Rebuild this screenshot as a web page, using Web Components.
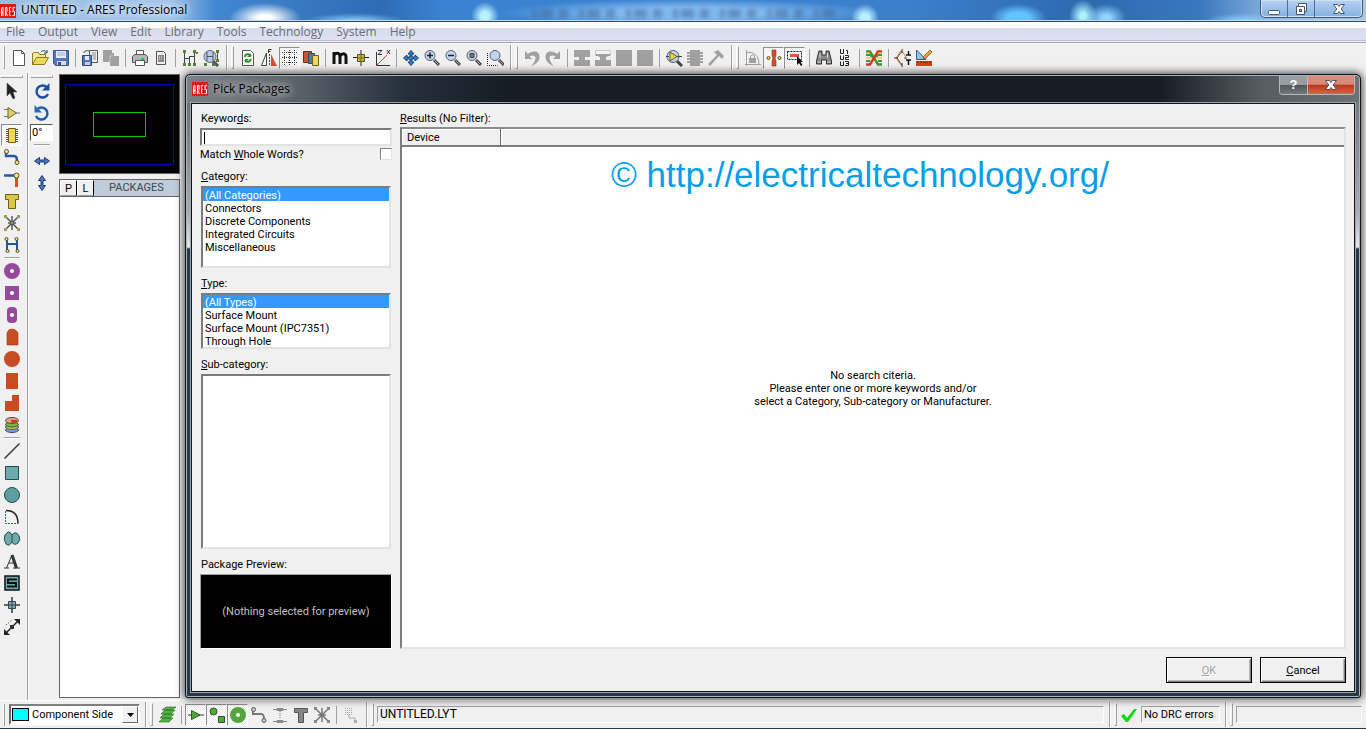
<!DOCTYPE html>
<html lang="en">
<head>
<meta charset="utf-8">
<title>UNTITLED - ARES Professional</title>
<style>
  html, body { margin: 0; height: 100%; }
  body { background: #f0f0f0; overflow: hidden; font: 11px/13px Roboto, "Liberation Sans", Arial, sans-serif; color: #000; }
</style>
</head>
<body>
<ares-app></ares-app>
<script>
/* Icon artwork, drawn on an 18 x 18 grid. */
const LENS = '<path d="M11 11l5 5" stroke="#444" stroke-width="3"/><path d="M11.500 11.500l4 4" stroke="#aaa"/><circle cx="7" cy="6.500" r="5" fill="#c3d3ee" stroke="#555e70"/>';
const ICONS = {
  new: '<path d="M3.500 1.500h8l3 3v12h-11z" fill="#fff" stroke="#555"/><path d="M11.500 1.500v3h3" fill="none" stroke="#555"/>',
  open: '<path d="M1.500 15.500v-11l2-1h4l1 2h6v3" fill="#f5e894" stroke="#8a7a1c"/><path d="M1.500 15.500l4-7h12l-4 7z" fill="#ecd95c" stroke="#8a7a1c"/><path d="M10 3c2-2 4-2 6 1m0-3v3h-3" fill="none" stroke="#26415c"/>',
  save: '<path d="M1.500 1.500h15v15h-13l-2-2z" fill="#5277b5" stroke="#3a5690"/><path d="M4 2h10v7H4z" fill="#e6edf8"/><path d="M5 4h8M5 6h8" stroke="#9cb0d4"/><path d="M5 12h9v4H5z" fill="#d8dce4"/><path d="M6 13h3v3H6z" fill="#35508a"/>',
  imp: '<path d="M8.500 1.500h8v12h-8z" fill="#eee" stroke="#555"/><path d="M3 4c1-3 4-3 6-1" fill="none" stroke="#26415c"/><path d="M11 4h4M11 6h4M12 8h3M12 10h3" stroke="#888"/><path d="M1.500 6.500h9v10h-9z" fill="#5277b5" stroke="#2f4a80"/><path d="M4 7h4v4H4z" fill="#e6edf8"/><path d="M4 13h5v3H4z" fill="#ccd"/>',
  exp: '<path d="M1 1h9v3h2v3h5v10H8v-4H1z" fill="#a0a0a0"/><path d="M8 13V7h3" stroke="#c8c8c8" fill="none"/>',
  print: '<path d="M5.500 6V1.500h7V6" fill="#fff" stroke="#555"/><path d="M1.500 7.500l2-2h11l2 2v6h-15z" fill="#b4b8bd" stroke="#555"/><path d="M4.500 11.500h9v5h-9z" fill="#fff" stroke="#555"/><path d="M10 9h3v2h-3z" fill="#2c2"/>',
  setup: '<path d="M4.500 2.500h7l2 2v11h-9z" fill="#eee" stroke="#555"/><path d="M6 6h6v7H6z" fill="#888"/><path d="M7 8h4M7 10h4" stroke="#ddd" stroke-dasharray="1 1"/>',
  net: '<path d="M3.500 3v13M3.500 9.500h5M8.500 7v9M8.500 7.500h5M13.500 3v13" stroke="#444" fill="none"/><path d="M2 1h3v3H2zM2 14h3v3H2zM7 14h3v3H7zM12 14h3v3h-3zM12 1h3v3h-3zM15 3h2v2h-2z" fill="#57803f"/>',
  netfind: '<path d="M11 12l5 5" stroke="#555" stroke-width="3"/><circle cx="8" cy="7.500" r="6" fill="#b8cbe8" stroke="#667"/><path d="M5 3v9M5 7.500h6M11 3v10M15.500 2v10" stroke="#555" fill="none"/><path d="M14 1h3v3h-3zM2 14h3v3H2zM10 14h3v3h-3zM14 10h3v3h-3z" fill="#57803f"/>',
  refresh: '<path d="M3.500 1.500h8l3 3v12h-11z" fill="#fff" stroke="#555"/><path d="M6 8c0-3 4-4 6-1M12 10c-1 3-4 4-6 1" stroke="#2f8f2f" stroke-width="2" fill="none"/><path d="M12 4v4H8zM6 14v-4h4z" fill="#2f8f2f"/>',
  flip: '<path d="M6.500 4v12.500h-5z" fill="#fff" stroke="#444"/><path d="M11 5l6 12h-6z" fill="#d4512e"/><path d="M9.500 5v12" stroke="#444" stroke-dasharray="2 1"/><path d="M8.500 4V.500h3M8.500 2.500h2" stroke="#333" fill="none"/>',
  grid: '<path d="M1 3.500h16M1 8.500h16M1 13.500h16M3.500 1v16M8.500 1v16M13.500 1v16" stroke="#333" stroke-dasharray="1 1"/>',
  layers3: '<path d="M1.500 2.500h8v11h-8z" fill="#c85434" stroke="#6a2a18"/><path d="M6.500 4.500h6v10h-6z" fill="#5577a8" stroke="#334766"/><path d="M10.500 6.500h6v10h-6z" fill="#ecd95c" stroke="#6d6118"/>',
  metric: '<path d="M3 15V3M3 6c3-3 6-2 6 2v7M9 7c3-4 6-2 6 1v7" stroke="#111" stroke-width="3" fill="none"/>',
  origin: '<path d="M9 1v16M1 8.500h16" stroke="#222"/><path d="M5.500 5.500h7v7h-7z" fill="#c9b738" stroke="#555122"/><path d="M9 5v8M5 9h8" stroke="#6b6423"/>',
  polar: '<path d="M3.500 3v13.500H17" stroke="#333" fill="none"/><path d="M3.500 16.500L14 6" stroke="#e0342a" fill="none"/><path d="M5 1.500h4l-4 4h4M14 1l3 4M17 1l-3 4" stroke="#333" fill="none"/>',
  pan: '<path d="M9 1.500l3 3.500h-2v3h3V6l3.500 3-3.500 3v-2h-3v3h2l-3 3.500L6 13h2v-3H5v2L1.500 9 5 6v2h3V5H6z" fill="#2d82cf" stroke="#18406e"/>',
  zin: LENS + '<path d="M4 6.500h6M7 3.500v6" stroke="#222" stroke-width="1.500"/>',
  zout: LENS + '<path d="M4 6.500h6" stroke="#222" stroke-width="1.500"/>',
  zall: LENS + '<path d="M5 4.500h4v4H5z" fill="#777" stroke="#444"/>',
  zarea: '<g transform="translate(2 0)">' + LENS + '</g><path d="M1.500 4v12.500h10" stroke="#222" fill="none" stroke-dasharray="1 1"/>',
  undo: '<path d="M2 2v8h7L6.500 7.500c3-2 6-1 6 1.500 0 3-2 5-4 8 5-2 8-5 8-9 0-6-6-7-11.500-3z" fill="#a0a0a0"/>',
  redo: '<path d="M16 2v8H9l2.500-2.500c-3-2-6-1-6 1.500 0 3 2 5 4 8-5-2-8-5-8-9 0-6 6-7 11.500-3z" fill="#a0a0a0"/>',
  bcopy: '<path d="M1 1h16v7h-5v3h5v6H1v-6h5V8H1z" fill="#a0a0a0"/>',
  bmove: '<path d="M1.500 7V1.500h15V7M1 17v-6h5V8H4l5-5 5 5h-2v3h5v6z" fill="#a0a0a0"/><path d="M2 2h14v3H2z" fill="#f4f4f4"/><path d="M6 5h6v6H6z" fill="#a0a0a0"/>',
  block: '<path d="M1 1h16v16H1z" fill="#a0a0a0"/>',
  pick: '<path d="M12 12l5 5" stroke="#444" stroke-width="3"/><circle cx="8" cy="7.500" r="6" fill="#c3d3ee" stroke="#555e70"/><path d="M5 3l7 4.500L5 12z" fill="#e6d65a" stroke="#6d6118"/><path d="M1 7.500h3M12 7.500h5" stroke="#444"/>',
  make: '<path d="M4 1h10v16H4z" fill="#a0a0a0"/><path d="M2.500 3v12M15.500 3v12" stroke="#a0a0a0" stroke-width="3" stroke-dasharray="2 1"/>',
  decomp: '<path d="M7 3l4-2 6 6-2 3-3-3-9 10-2-2L10 6z" fill="#a0a0a0"/>',
  lock: '<path d="M2.500 1v16M1 15.500h16M3 3.500h4q8 2 8 12" fill="none" stroke="#a0a0a0"/><path d="M5 9h7v5H5z" fill="#a0a0a0"/><path d="M6.500 9V7q2-2 4 0v2" fill="none" stroke="#a0a0a0"/>',
  trace: '<path d="M7 1h4v6l-1 2 1 3v5H7v-5l1-3-1-2z" fill="#d4512e" stroke="#8a2e14" stroke-width=".6"/><circle cx="3.500" cy="9" r="1.500" fill="#ecd95c" stroke="#555122"/><circle cx="14.500" cy="9" r="1.500" fill="#ecd95c" stroke="#555122"/>',
  selfil: '<path d="M1.500 2.500h14v8h-14z" fill="none" stroke="#222" stroke-dasharray="2 1"/><path d="M4 5h9v3H4z" fill="#e0583a"/><path d="M11 7v9l2-2 2 3 1.500-1-2-3H17z" fill="#111"/>',
  find: '<path d="M4 2h3v4h4V2h3l2.500 10v3h-5v-4h-5v4h-5v-3z" fill="#888" stroke="#333"/><path d="M5 4v5M12.500 4v5" stroke="#ddd"/><path d="M2 13h4M12 13h4" stroke="#ccc"/>',
  annot: '<path d="M4.500 0v4.500h3V0M10 1.500h1.500V5M4.500 6.500v4h3v-4M9 6.500h3.500v2h-3v2H13M4.500 12.500v4h3v-4M9 12.500h3.500v4H9M10 14.500h2" fill="none" stroke="#222"/>',
  auto: '<path d="M1 2.500h4l8 13h4" stroke="#3d9930" stroke-width="2.500" fill="none"/><path d="M1 15.500h4l8-13h4" stroke="#dc3524" stroke-width="2.500" fill="none"/><path d="M1 6h4l3 2.500M17 6h-4l-2 2M1 12h4M17 12h-4" stroke="#3d9930" stroke-width="2" fill="none"/><path d="M1 4h4M13 4h4M1 9h5M12 9h5" stroke="#eda72f"/>',
  drc: '<path d="M8 2L3 9l5 7" stroke="#555" fill="none"/><path d="M7 2L2 9l5 7M8 2l4 6" stroke="#e07b29" fill="none"/><path d="M0 9h4M8 0v4M8 14v4M10 9h3" stroke="#333"/><path d="M12 6h5M14.500 2v4M12 11h5M14.500 11v5" stroke="#111" stroke-width="1.500"/>',
  ruler: '<path d="M1.500 1v9.500H11z" fill="#8cc9e8" stroke="#2a6080"/><path d="M8 10l1-3 6-6 2 2-6 6z" fill="#e8a33a" stroke="#6d4a18" stroke-width=".7"/><path d="M1 12h16v5H1z" fill="#d4441e"/><path d="M3 12v2M6 12v2M9 12v2M12 12v2M15 12v2" stroke="#6a1c08"/>',
  arrow: '<path d="M4 1v13l3-3 3 6 2-1-2-6h4z" fill="#222" stroke="#555" stroke-width=".6"/>',
  comp: '<path d="M1 5.500h4M1 12.500h4M13 9h4" stroke="#777"/><path d="M5 3.500L13.500 9 5 14.500z" fill="#ddcc68" stroke="#6d6630"/>',
  chip: '<path d="M4 3v13M14 3v13" stroke="#555" stroke-width="2" stroke-dasharray="1 1"/><path d="M5.500 2.500h7v14h-7z" fill="#ecd95c" stroke="#6d6118"/>',
  track: '<path d="M3 4v4h8q3 0 3 5" stroke="#2556a4" stroke-width="2.500" fill="none"/><circle cx="3.500" cy="3.500" r="2" fill="#f1e788" stroke="#555122"/><circle cx="14" cy="14.500" r="2" fill="#f1e788" stroke="#555122"/>',
  via: '<path d="M1 5.500h10" stroke="#2556a4" stroke-width="2.500"/><path d="M13.500 7v10" stroke="#d4512e" stroke-width="3"/><circle cx="13.500" cy="5.500" r="2.500" fill="#f1e788" stroke="#555122"/>',
  zone: '<path d="M2.500 2.500h13v5h-3v9h-7v-9h-3z" fill="#d9c74c" stroke="#6d6118"/>',
  rats: '<path d="M3 3l12 12M15 3L3 15M9 2v14M5 9h8" stroke="#555" stroke-width="1.500"/><path d="M1 1h3v3H1zM14 1h3v3h-3zM1 14h3v3H1zM14 14h3v3h-3zM8 8h2v2H8z" fill="#9a9a50"/>',
  conn: '<path d="M4 3v5h10V3M4 15V8M14 15V8" stroke="#2556a4" stroke-width="2" fill="none"/><circle cx="3.500" cy="3" r="1.500" fill="#f1e788" stroke="#555122"/><circle cx="13.500" cy="3" r="1.500" fill="#f1e788" stroke="#555122"/><circle cx="4.500" cy="15" r="1.500" fill="#f1e788" stroke="#555122"/><circle cx="14.500" cy="15" r="1.500" fill="#f1e788" stroke="#555122"/>',
  padc: '<circle cx="9" cy="9" r="8" fill="#954a9b"/><circle cx="9" cy="9" r="2" fill="#fff"/>',
  pads: '<path d="M2 2h14v14H2z" fill="#954a9b"/><circle cx="9" cy="9" r="2" fill="#fff"/>',
  pado: '<rect x="4" y="1" width="10" height="16" rx="4" fill="#954a9b"/><circle cx="9" cy="9" r="2" fill="#fff"/>',
  edge: '<path d="M4 17V5q1-4 5-4t6 4v12z" fill="#c84c22" stroke="#a03a18" stroke-width=".6"/>',
  smc: '<circle cx="9" cy="9" r="8" fill="#c84c22"/>',
  sms: '<path d="M3 1h12v16H3z" fill="#c84c22"/>',
  poly: '<path d="M2 17V7h7V1h7v16z" fill="#c84c22"/>',
  stack: '<ellipse cx="9" cy="14" rx="6.500" ry="2.500" fill="#6fa4e8" stroke="#445"/><ellipse cx="9" cy="11" rx="6.500" ry="2.500" fill="#d8c45a" stroke="#554"/><ellipse cx="9" cy="8.500" rx="6.500" ry="2.500" fill="#6cc040" stroke="#354"/><ellipse cx="9" cy="4.500" rx="6.500" ry="3" fill="#e59a8c" stroke="#644"/><path d="M8 4h6v2q-3 2-6 0z" fill="#d8391c"/>',
  line: '<path d="M1.500 16.500l15-15" stroke="#333" stroke-width="1.500"/>',
  rect: '<path d="M2.500 2.500h13v13h-13z" fill="#6cabab" stroke="#2a4a52"/>',
  circ: '<circle cx="9" cy="9" r="7.500" fill="#5f9ea0" stroke="#2a4a52"/>',
  arc: '<path d="M3 2.500q12 0 12 13" fill="none" stroke="#222" stroke-width="1.500"/><path d="M2.500 3v12.500H15" fill="none" stroke="#2a64b0" stroke-dasharray="2 1"/>',
  path: '<path d="M9 5q4-5 7 1 2 4-1 7-4 3-6-1-3 5-6 2-3-5-1-9 4-6 7 0z" fill="#6cabab" stroke="#2a4a52"/><path d="M9 5v7" stroke="#2a4a52"/>',
  text: '<path d="M1 16h5M10 16h7M3.500 16L9 3M6 11h6" stroke="#333" fill="none"/><path d="M9 3l4.500 13" stroke="#333" stroke-width="3"/>',
  sym: '<path d="M2 2h14v14H2z" fill="#6cabab" stroke="#111" stroke-width="1.500"/><path d="M14 5.500H5V9h8v3.500H4" fill="none" stroke="#111" stroke-width="2"/>',
  marker: '<path d="M9 1v16M1 9h16" stroke="#333" stroke-width="1.500"/><path d="M5.500 5.500h7v7h-7z" fill="#86a7b5" stroke="#2a4a52"/><path d="M9 5v8M5 9h8" stroke="#2a4a52"/>',
  dim: '<path d="M2 16L16 2" stroke="#222" stroke-width="1.500"/><path d="M17 1v6l-6-6zM1 17v-6l6 6z" fill="#222"/><path d="M7 7h4v4H7z" fill="#333"/><path d="M3 7l6-5" stroke="#222" stroke-dasharray="1 2"/>',
  cw: '<path d="M14 5.500A6 6 0 1 0 15 12" fill="none" stroke="#1d4f9c" stroke-width="2.500"/><path d="M16.500 1v7.500H9z" fill="#1d4f9c"/>',
  ccw: '<path d="M4 5.500A6 6 0 1 1 3 12" fill="none" stroke="#1d5fa8" stroke-width="2.500"/><path d="M1.500 1v7.500H9z" fill="#2a6cb4"/>',
  hflip: '<path d="M1.500 9l5-3.500V8h5V5.500L16.500 9l-5 3.500V10h-5v2.500z" fill="#4878c4" stroke="#1c3c6c"/>',
  vflip: '<path d="M9 1.500l3.500 5H10v5h2.500L9 16.500l-3.500-5H8v-5H5.500z" fill="#4878c4" stroke="#1c3c6c"/>',
  glayers: '<path d="M1 16l4-4h10l-4 4zM2 12l4-4h10l-4 4zM3 8l4-4h10l-4 4zM4 4l4-3h10l-4 3z" fill="#57b045" stroke="#246a1e" stroke-width=".6"/>',
  gcomp: '<path d="M1 9h16" stroke="#333"/><path d="M4.500 4.500L13 9l-8.500 4.500z" fill="#57a540" stroke="#2b5a20"/>',
  gshape: '<circle cx="5.500" cy="5.500" r="3.500" fill="#57a540" stroke="#2b5a20"/><path d="M10.500 10.500h6v6h-6z" fill="#57a540" stroke="#2b5a20"/>',
  gpad: '<circle cx="9" cy="9" r="8" fill="#57a540"/><circle cx="9" cy="9" r="2" fill="#fff"/>',
  gtrack: '<path d="M3 4v4h8q3 0 3 5" stroke="#777" stroke-width="2" fill="none"/><circle cx="3.500" cy="3.500" r="2" fill="#ccc" stroke="#555"/><circle cx="14" cy="14.500" r="2" fill="#ccc" stroke="#555"/>',
  gvia: '<path d="M2 3.500h14M2 15.500h14M6 2.500h6v2H6zM6 14.500h6v2H6z" fill="none" stroke="#888"/><path d="M9 5v8" stroke="#777" stroke-dasharray="1 1"/>',
  gzone: '<path d="M2.500 2.500h13v4h-4v10h-5v-10h-4z" fill="#888" stroke="#555"/>',
  grats: '<path d="M3 3l12 12M15 3L3 15M9 2v14M5 9h8" stroke="#777" stroke-width="1.500"/><path d="M1 1h3v3H1zM14 1h3v3h-3zM1 14h3v3H1zM14 14h3v3h-3z" fill="#888"/>',
  gfilter: '<path d="M3 2.500h7M3 4.500h7M3 6.500h7M3 8.500h7" stroke="#aaa" stroke-dasharray="1 1"/><path d="M7 8v4h6v4" stroke="#aaa" fill="none"/><path d="M12 14h3v3h-3z" fill="#aaa"/>',
  check: '<path d="M1 10l3-2 3 4 7-9h3L8 16H6z" fill="#0bdc0b"/>'
};

const svg = (name, size = 18) =>
  `<svg width="${size}" height="${size}" viewBox="0 0 18 18" aria-hidden="true">${ICONS[name]}</svg>`;

/* Registers an element whose shadow tree comes from a template. */
function define(name, css, html, ready) {
  customElements.define(name, class extends HTMLElement {
    connectedCallback() {
      if (this.shadowRoot) return;
      const t = document.createElement('template');
      t.innerHTML = `<style>*{box-sizing:border-box}${css}</style>${typeof html === 'function' ? html(this) : html}`;
      this.attachShadow({ mode: 'open' }).append(t.content.cloneNode(true));
      if (ready) ready(this.shadowRoot, this);
    }
  });
}
const btns = list => list.split(' ').map(n => {
  if (n === '|') return '<tool-sep></tool-sep>';
  const on = n.endsWith('*');
  return `<tool-button icon="${n.replace('*', '')}"${on ? ' pressed' : ''}></tool-button>`;
}).join('');

define('tool-button', `
  :host { display: block; flex: none; width: 21px; height: 22px; }
  button { width: 100%; height: 100%; border: 1px solid transparent; padding: 0; background: none; display: flex; align-items: center; justify-content: center; }
  :host([pressed]) button { border-color: #8c8c8c #fff #fff #8c8c8c; background: repeating-conic-gradient(#fff 0 25%, #ececec 0 50%) 0 0 / 2px 2px; }
  svg { flex: none; }`,
  el => `<button type="button" aria-label="${el.getAttribute('icon')}">${svg(el.getAttribute('icon'), 18)}</button>`);

define('tool-sep', `
  :host { display: block; flex: none; width: 8px; height: 18px; padding-left: 4px; }
  :host([horizontal]) { width: 100%; height: 4px; padding: 1px 3px 0 4px; }
  i { display: block; height: 100%; border-left: 1px solid #a0a0a0; }
  :host([horizontal]) i { height: 2px; border-left: 0; border-top: 1px solid #a0a0a0; background: #fff; }`, '<i></i>');

/* Group divider followed by the drag handle of the next group. */
define('tool-grip', `
  :host { display: flex; flex: none; align-self: stretch; width: 16px; padding: 1px 3px 1px 5px; gap: 3px; align-items: center; }
  :host([first]) { width: 8px; padding-left: 3px; }
  :host([first]) .bar { display: none; }
  .bar { width: 2px; align-self: stretch; background: linear-gradient(90deg, #a0a0a0 50%, #fff 50%); }
  .grip { width: 3px; height: 23px; border: 1px solid; border-color: #fff #a0a0a0 #a0a0a0 #fff; }`,
  '<span class="bar"></span><span class="grip"></span>');

define('title-bar', `
  :host { display: flex; justify-content: space-between; height: 22px; border-bottom: 1px solid #33475c; box-shadow: inset 0 -1px #c3dcf5; padding: 0 3px 0 0; position: relative; overflow: hidden;
    font: 12px/16px "Open Sans", "Noto Sans", sans-serif;
    background:
      radial-gradient(circle at 485px 16px, #b9f0ff 0 4px, transparent 14px),
      radial-gradient(circle at 865px 18px, #b9f0ff 0 4px, transparent 14px),
      radial-gradient(ellipse 36px 15px at 265px 18px, #fff 0 20%, transparent),
      radial-gradient(ellipse 50px 8px at 355px 21px, #8fd4ff, transparent),
      radial-gradient(ellipse 28px 14px at 1018px 18px, #62c4ff 0 40%, transparent),
      radial-gradient(ellipse 14px 16px at 1083px 16px, #aef0ff 0 20%, transparent),
      radial-gradient(ellipse 20px 14px at 1106px 18px, #8fd4ff 0 20%, transparent),
      radial-gradient(ellipse 40px 8px at 1245px 21px, #8fd4ff, transparent),
      radial-gradient(ellipse 190px 14px at 690px 13px, #7fb9ef 0 40%, transparent),
      linear-gradient(90deg, #98bde5 0, #a3c5ea 170px, #4287d0 215px, #2e6cb4 380px, #3b82d2 440px, #3c80cc 900px, #2d69ae 1090px, #3a78bd 1200px, #9cc0e8 1290px, #a9c8ea); }
  .smudge { position: absolute; left: 532px; top: 9px; width: 304px; height: 9px; filter: blur(2px); opacity: .45;
    background: repeating-linear-gradient(90deg, #3d5f8f 0 5px, transparent 5px 8px, #3d5f8f 8px 21px, transparent 21px 27px, #3d5f8f 27px 36px, transparent 36px 47px); }
  .name { display: flex; align-items: center; gap: 5px; }
  h1 { margin: 0; font: inherit; padding-bottom: 1px; text-shadow: 0 0 6px #fff, 0 0 8px #fff; }
  .ctl { display: flex; height: 18px; border: 1px solid #3c5878; border-top: 0; border-radius: 0 0 5px 5px; background: linear-gradient(#b5d2f2, #86b0e2); box-shadow: inset 0 0 0 1px #cfe3f7; z-index: 1; }
  button { width: 27px; padding: 0; border: 0; border-right: 1px solid #4c6f98; background: none; display: flex; justify-content: center; align-items: center; }
  button:last-child { width: 47px; border: 0; }`,
  `<div class="name"><ares-logo></ares-logo><h1>UNTITLED - ARES Professional</h1></div><span class="smudge"></span>
   <div class="ctl">
    <button type="button" aria-label="Minimize"><svg width="14" height="12"><rect x="1.500" y="7.500" width="11" height="4" rx="1" fill="#fff" stroke="#4a5666"/></svg></button>
    <button type="button" aria-label="Restore"><svg width="14" height="14"><path d="M4.500 1.500h8v8h-2v3h-8v-8h2z" fill="#fff" stroke="#4a5666"/><path d="M4.500 4.500h6v6" fill="none" stroke="#4a5666"/><rect x="5.500" y="7.500" width="2" height="2" fill="#9bbce0" stroke="#4a5666"/></svg></button>
    <button type="button" aria-label="Close"><svg width="14" height="12"><path d="M1.500 1.500h4L7 3.500l1.500-2h4L9.200 6l3.300 4.500h-4L7 8.500l-1.500 2h-4L4.800 6z" fill="#fff" stroke="#4a5666"/></svg></button>
   </div>`);

define('ares-logo', `
  :host { display: block; width: 16px; height: 14px; background: #e31b14; }
  svg { display: block; }`,
  `<svg width="16" height="14" aria-label="ARES"><path d="M1.500 12V4.500q0-1 1.500-1V12M1 8.500h2M5.500 12V3.500H7v4l-1 1 1.500 3.500M11 3.500H9.500v8H11M9 7.500h2M15 3.500h-2v4h1.500v4H12.500" fill="none" stroke="#fff"/></svg>`);

define('menu-bar', `
  :host { display: block; height: 21px; background: linear-gradient(#fdfdff 0 6px, #d6dcee 6px, #dde3f4 18px); border-bottom: 1px solid #a0a0a0; box-shadow: inset 0 -1px #f4f4f8, inset 0 -2px #b8bfd0; }
  nav { display: flex; padding: 2px 0 0 6px; gap: 13px; font: 12px/16px "Open Sans", "Noto Sans", sans-serif; }
  a { color: #6d6d6d; text-decoration: none; }`,
  `<nav>${['File', 'Output', 'View', 'Edit', 'Library', 'Tools', 'Technology', 'System', 'Help'].map(t => `<a href="#">${t}</a>`).join('')}</nav>`);

define('tool-bar', `
  :host { display: flex; align-items: center; height: 30px; padding-bottom: 2px; border-top: 1px solid #fff; }`,
  `<tool-grip first></tool-grip>${btns('new open save | imp exp | print setup | net netfind')}
   <tool-grip></tool-grip>${btns('refresh flip grid* layers3 | metric origin polar | pan zin zout zall zarea')}
   <tool-grip></tool-grip>${btns('undo redo | bcopy bmove block block | pick make decomp')}
   <tool-grip></tool-grip>${btns('lock trace* selfil* | find annot | auto | drc ruler')}`);

define('mode-rail', `
  :host { display: flex; flex-direction: column; align-items: center; padding: 2px 4px 0 0; border-right: 1px solid #a0a0a0; box-shadow: 1px 0 #fff; }
  .grip { width: 23px; height: 3px; border: 1px solid; border-color: #fff #a0a0a0 #a0a0a0 #fff; margin-bottom: 2px; }`,
  `<span class="grip"></span>${btns('arrow comp chip* track via zone rats conn')}<tool-sep horizontal></tool-sep>
   ${btns('padc pads pado edge smc sms poly stack')}<tool-sep horizontal></tool-sep>
   ${btns('line rect circ arc path text sym marker dim')}`);

define('orient-rail', `
  :host { display: flex; flex-direction: column; align-items: center; padding: 2px 6px 0 2px; }
  .grip { width: 23px; height: 3px; border: 1px solid; border-color: #fff #a0a0a0 #a0a0a0 #fff; margin-bottom: 2px; }
  input { width: 23px; height: 17px; padding: 0 1px; margin: 0 0 2px; border: 1px solid; border-color: #555 #fff #fff #555; border-radius: 0; background: #fff; font: 11px/13px Roboto, "Liberation Sans", sans-serif; }
  tool-sep { margin-bottom: 3px; }`,
  `<span class="grip"></span>${btns('cw ccw')}<input aria-label="Rotation angle" value="0°"><tool-sep horizontal></tool-sep>${btns('hflip vflip')}`);

define('object-panel', `
  :host { display: flex; flex-direction: column; gap: 5px; padding: 1px 0 2px; min-height: 0; }
  .view { height: 100px; border: 1px solid #646464; background: #000; padding: 9px 5px 8px; }
  .board { height: 100%; border: 1px solid #0000b4; display: flex; align-items: center; justify-content: center; }
  .frame { width: 53px; height: 25px; border: 1px solid #00c800; }
  .box { flex: 1; border: 1px solid #646464; background: #fff; min-height: 0; }
  .head { display: flex; height: 17px; background: #bfccda; border-bottom: 1px solid #646464; }
  button { width: 17px; height: 16px; padding: 0; font: inherit; line-height: 13px; background: #f0f0f0; border: 1px solid; border-color: #fff #000 #a0a0a0 #fff; }
  h2 { margin: 0; flex: 1; text-align: center; font: inherit; line-height: 16px; color: #3c4650; }`,
  `<div class="view"><div class="board"><div class="frame"></div></div></div>
   <div class="box"><div class="head"><button type="button">P</button><button type="button">L</button><h2>PACKAGES</h2></div></div>`);

const SUNK = 'border: 2px solid; border-color: #7c7c7c #e3e3e3 #e3e3e3 #7c7c7c;';

define('list-field', `
  :host { display: flex; flex-direction: column; gap: 3px; min-height: 0; }
  label { padding-left: 1px; }
  select { display: block; width: 190px; margin-left: 1px; height: var(--list-height, auto); flex: 1 1 auto; padding: 0; margin-top: 0; border-radius: 0; outline: 0; background: #fff; overflow: hidden; scrollbar-width: none; font: 11px/13px Roboto, "Liberation Sans", sans-serif; color: #000; ${SUNK} }
  option { padding: 1px 2px 0; min-height: 13px; height: 13px; line-height: 12px; }
  option:checked { background: linear-gradient(#39f, #39f); -webkit-text-fill-color: #fff; }`,
  el => `<label for="list"><slot></slot></label><select id="list" size="4">${(el.getAttribute('items') || '').split('|').filter(Boolean).map((o, i) => `<option${i ? '' : ' selected'}>${o}</option>`).join('')}</select>`);

define('push-button', `
  :host { display: block; width: 86px; height: 26px; }
  button { width: 100%; height: 100%; padding: 0; font: 11px/13px Roboto, "Liberation Sans", sans-serif; color: #000; background: #f0f0f0; border: 1px solid #000; box-shadow: inset 1px 1px #fff, inset -1px -1px #808080, inset -2px -2px #b8b8b8; }
  button:disabled { color: #a0a0a0; text-shadow: 1px 1px #fff; }`,
  el => `<button type="button"${el.hasAttribute('disabled') ? ' disabled' : ''}><slot></slot></button>`);

define('result-list', `
  :host { display: flex; flex-direction: column; background: #fff; border: 2px solid; border-color: #8c8c8c #e3e3e3 #e3e3e3 #7c7c7c; min-height: 0; }
  table { width: 100%; border-collapse: collapse; flex: none; }
  th { height: 17px; padding: 1px 5px 0; text-align: left; font-weight: normal; background: #f0f0f0; border-bottom: 2px solid #7c7c7c; box-shadow: inset 1px 1px #fff; }
  th:first-child { width: 98px; border-right: 1px solid #696969; }
  .body { flex: 1; display: flex; flex-direction: column; }
  .mark { margin: 8px 26px 0 0; text-align: center; font: 35px/40px "Liberation Sans", Arial, sans-serif; color: #069fe6; }
  p { margin: 174px 0 0; text-align: center; }`,
  `<table><thead><tr><th scope="col">Device</th><th aria-label="Details"></th></tr></thead></table>
   <div class="body"><div class="mark">© http://electricaltechnology.org/</div>
   <p>No search citeria.<br>Please enter one or more keywords and/or<br>select a Category, Sub-category or Manufacturer.</p></div>`);

define('pick-dialog', `
  :host { display: flex; flex-direction: column; position: relative; z-index: 2; border: 1px solid #10151b; border-radius: 5px 5px 3px 3px; padding: 0 5px 5px;
    box-shadow: 0 0 9px 1px rgba(0,0,0,.75), inset 0 0 0 1px #aab4be;
    background:
      linear-gradient(#6c7075, #a9adb1 110px, #e8e8e8 144px, #26384a 146px) left 1px top 28px / 5px 100% no-repeat,
      linear-gradient(#777b7e, #a9adb1 110px, #e8e8e8 144px, #26384a 146px) right 1px top 28px / 5px 100% no-repeat,
      linear-gradient(90deg, #7d8185 0, #565e66 120px, #26303a 220px, #161d25 320px, #161d25 calc(100% - 200px), #565c60 calc(100% - 100px), #6e7274) top / 100% 30px no-repeat, #26384a; }
  header { display: flex; justify-content: space-between; height: 28px; }
  .name { display: flex; align-items: center; gap: 5px; padding-left: 1px; }
  h2 { margin: 0; font: 12px/16px "Open Sans", "Noto Sans", sans-serif; color: #000; text-shadow: 0 0 6px #b4b8bc, 0 0 8px #b4b8bc, 0 0 12px #a0a4a8, 0 0 14px #a0a4a8; }
  .ctl { display: flex; height: 19px; margin-top: 1px; border: 1px solid #b6b9bc; border-top: 0; border-radius: 0 0 4px 4px; overflow: hidden; }
  .ctl button { width: 28px; padding: 0; border: 0; border-right: 1px solid #b6b9bc; background: linear-gradient(#989da1 48%, #50565c 52%, #73787d); color: #fff; font: bold 13px/16px "Liberation Sans", Arial, sans-serif; display: flex; align-items: center; justify-content: center; }
  .ctl button:last-child { width: 46px; border: 0; background: linear-gradient(#d98a78 45%, #b8391a 52%, #d0694a); }
  main { flex: 1; min-height: 0; display: grid; grid-template: minmax(0, 1fr) 26px / 192px minmax(0, 1fr); gap: 8px; padding: 8px; background: #f0f0f0; border: 1px solid #10151b; box-shadow: 0 0 0 1px #9da4aa; }
  .left { display: flex; flex-direction: column; gap: 9px; min-height: 0; }
  .group { display: flex; flex-direction: column; }
  .group input[type=text] { height: 18px; margin: 3px 0 2px; padding: 0 1px; border-radius: 0; outline: 0; background: #fff; font: inherit; ${SUNK} }
  .row { display: flex; justify-content: space-between; height: 13px; }
  .row input { appearance: none; width: 12px; height: 12px; margin: 0; background: #fff; border: 1px solid; border-color: #808080 #e3e3e3 #e3e3e3 #808080; }
  label, .cap { padding-left: 1px; }
  .row label { padding: 0; }
  .preview { height: 75px; margin-top: 3px; background: #000; color: #c0c0c0; border: 1px solid; border-color: #a0a0a0 #fff #fff #a0a0a0; display: flex; align-items: center; justify-content: center; }
  .caret { position: absolute; left: 18px; top: 57px; width: 1px; height: 12px; background: #000; }
  .right { display: flex; flex-direction: column; gap: 2px; min-height: 0; }
  .right result-list { flex: 1; }
  .cap { flex: none; }
  .right .cap { padding: 0; }
  footer { grid-column: 1 / -1; display: flex; justify-content: flex-end; gap: 8px; }
  .grow { flex: 1; }`,
  `<header><div class="name"><ares-logo></ares-logo><h2>Pick Packages</h2></div>
    <div class="ctl"><button type="button">?</button><button type="button" aria-label="Close"><svg width="14" height="12"><path d="M1.500 1.500h4L7 3.500l1.500-2h4L9.200 6l3.300 4.500h-4L7 8.500l-1.500 2h-4L4.800 6z" fill="#fff" stroke="#4a5666"/></svg></button></div></header>
   <main>
    <div class="left">
     <div class="group"><label for="kw">Keywor<u>d</u>s:</label><input type="text" id="kw"><span class="caret"></span>
      <div class="row"><label for="whole">Match <u>W</u>hole Words?</label><input type="checkbox" id="whole"></div></div>
     <list-field style="--list-height:82px" items="(All Categories)|Connectors|Discrete Components|Integrated Circuits|Miscellaneous"><u>C</u>ategory:</list-field>
     <list-field style="--list-height:56px" items="(All Types)|Surface Mount|Surface Mount (IPC7351)|Through Hole"><u>T</u>ype:</list-field>
     <list-field class="grow"><u>S</u>ub-category:</list-field>
     <div class="group"><span class="cap">Package Preview:</span><div class="preview">(Nothing selected for preview)</div></div>
    </div>
    <div class="right"><span class="cap"><u>R</u>esults (No Filter):</span><result-list></result-list></div>
    <footer><push-button disabled><u>O</u>K</push-button><push-button><u>C</u>ancel</push-button></footer>
   </main>`);

define('layer-select', `
  :host { display: flex; align-items: center; width: 131px; height: 21px; margin-left: 1px; background: #fff; border: 2px solid; border-color: #808080 #fff #fff #696969; flex: none; }
  .chip { width: 17px; height: 13px; margin-left: 1px; background: #0ff; border: 1px solid #000; flex: none; }
  select { appearance: none; flex: 1; min-width: 0; height: 17px; border: 0; padding: 0 0 0 3px; background: none; font: 11px/13px Roboto, "Liberation Sans", sans-serif; color: #000; }
  .drop { width: 16px; height: 17px; background: #f0f0f0; border: 1px solid; border-color: #fff #696969 #696969 #fff; display: flex; align-items: center; justify-content: center; pointer-events: none; flex: none; }`,
  `<span class="chip"></span><select aria-label="Layer"><option>Component Side</option></select><span class="drop"><svg width="7" height="4"><path d="M0 0h7L3.500 4z"/></svg></span>`);

define('status-bar', `
  :host { display: flex; align-items: center; height: 29px; padding-right: 4px; border-bottom: 1px solid #26384a; border-top: 1px solid #fff; }
  .pane { height: 17px; border: 1px solid; border-color: #a0a0a0 #fff #fff #a0a0a0; padding: 0 2px; line-height: 15px; }
  .file { flex: 1; font-size: 12px; }
  .drc { width: 79px; }
  .hint { width: 126px; }
  .ok { display: flex; width: 21px; padding-right: 1px; }`,
  `<tool-grip first></tool-grip><layer-select></layer-select><tool-grip></tool-grip>
   ${btns('glayers | gcomp* gshape* gpad* gtrack gvia gzone grats | gfilter')}
   <tool-grip></tool-grip><span class="pane file">UNTITLED.LYT</span>
   <tool-grip></tool-grip><span class="ok">${svg('check')}</span><span class="pane drc">No DRC errors</span>
   <tool-grip></tool-grip><span class="pane hint"></span>`);

define('ares-app', `
  :host { display: flex; flex-direction: column; min-height: 100vh; height: 100%; background: #f0f0f0; }
  .work { flex: 1; min-height: 0; display: grid; grid-template-columns: 28px 31px 121px minmax(0, 1fr); }
  pick-dialog { margin: 1px 5px 2px; }`,
  `<title-bar></title-bar><menu-bar></menu-bar><tool-bar></tool-bar>
   <div class="work"><mode-rail></mode-rail><orient-rail></orient-rail><object-panel></object-panel><pick-dialog></pick-dialog></div>
   <status-bar></status-bar>`);
</script>
</body>
</html>
